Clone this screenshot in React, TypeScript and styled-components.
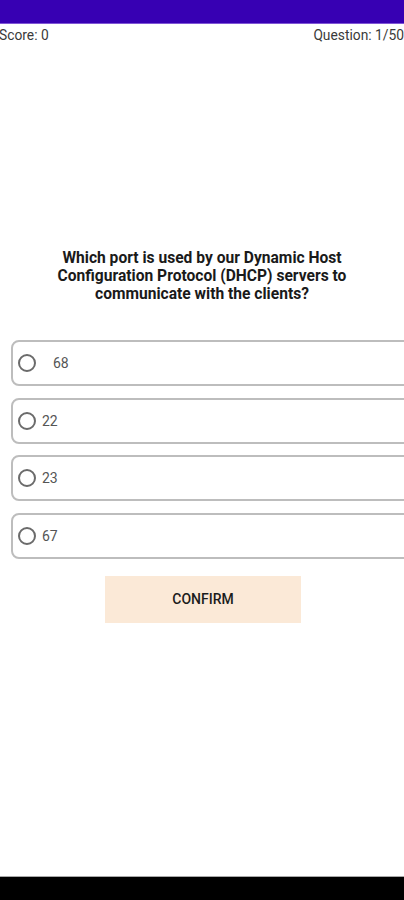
import styled, { createGlobalStyle } from 'styled-components';

const GlobalStyle = createGlobalStyle`
  html, body {
    margin: 0;
    padding: 0;
    background: #ffffff;
    overflow: hidden;
  }
  body {
    font-family: Roboto, "Liberation Sans", Arial, sans-serif;
  }
`;

const Screen = styled.div`
  width: 404px;
  height: 900px;
  display: flex;
  flex-direction: column;
  background: #fff;
  overflow: hidden;
`;

const StatusBar = styled.div`
  height: 24px;
  flex-shrink: 0;
  background: #3700b3;
  border-bottom: 1px solid #7f55d6;
  box-sizing: border-box;
`;

const InfoRow = styled.div`
  display: flex;
  justify-content: space-between;
  padding: 3px 0 0 0;
  margin-left: -1px;
  font-size: 13.8px;
  line-height: 17px;
  color: #3a3a3a;
`;

const Question = styled.p`
  margin: 205px auto 0;
  width: 320px;
  text-align: center;
  font-size: 15.6px;
  font-weight: 700;
  line-height: 18px;
  color: #1a1a1a;
`;

const Options = styled.div`
  display: flex;
  flex-direction: column;
  gap: 11.5px;
  margin: 37px 0 0 11px;
`;

const Option = styled.label`
  height: 46px;
  width: 420px;
  box-sizing: border-box;
  border: 2px solid #bdbdbd;
  border-radius: 8px;
  display: flex;
  align-items: center;
  padding-left: 5px;
`;

const Radio = styled.span`
  width: 18px;
  height: 18px;
  box-sizing: border-box;
  border: 2px solid #6b6b6b;
  border-radius: 50%;
  flex-shrink: 0;
`;

const OptionText = styled.span<{ $indent: number }>`
  margin-left: ${p => p.$indent}px;
  font-size: 14px;
  color: #555;
`;

const ConfirmButton = styled.button`
  align-self: center;
  margin: 17px 0 0 2px;
  width: 196px;
  height: 47px;
  border: none;
  background: #fbe9d7;
  font-family: Roboto, "Liberation Sans", Arial, sans-serif;
  font-size: 14px;
  font-weight: 500;
  color: #1c1c1c;
  text-transform: uppercase;
`;

const Spacer = styled.div`
  flex: 1;
`;

const NavBar = styled.div`
  height: 24px;
  flex-shrink: 0;
  background: #000;
  border-top: 1px solid #a8a8a8;
  box-sizing: border-box;
`;

const answers = [
  { text: '68', indent: 17 },
  { text: '22', indent: 6 },
  { text: '23', indent: 6 },
  { text: '67', indent: 6 },
];

export default function App() {
  return (
    <Screen>
      <GlobalStyle />
      <StatusBar />
      <InfoRow>
        <span>Score: 0</span>
        <span>Question: 1/50</span>
      </InfoRow>
      <Question>
        Which port is used by our Dynamic Host Configuration Protocol (DHCP) servers to communicate with the clients?
      </Question>
      <Options>
        {answers.map(a => (
          <Option key={a.text}>
            <Radio />
            <OptionText $indent={a.indent}>{a.text}</OptionText>
          </Option>
        ))}
      </Options>
      <ConfirmButton>Confirm</ConfirmButton>
      <Spacer />
      <NavBar />
    </Screen>
  );
}
